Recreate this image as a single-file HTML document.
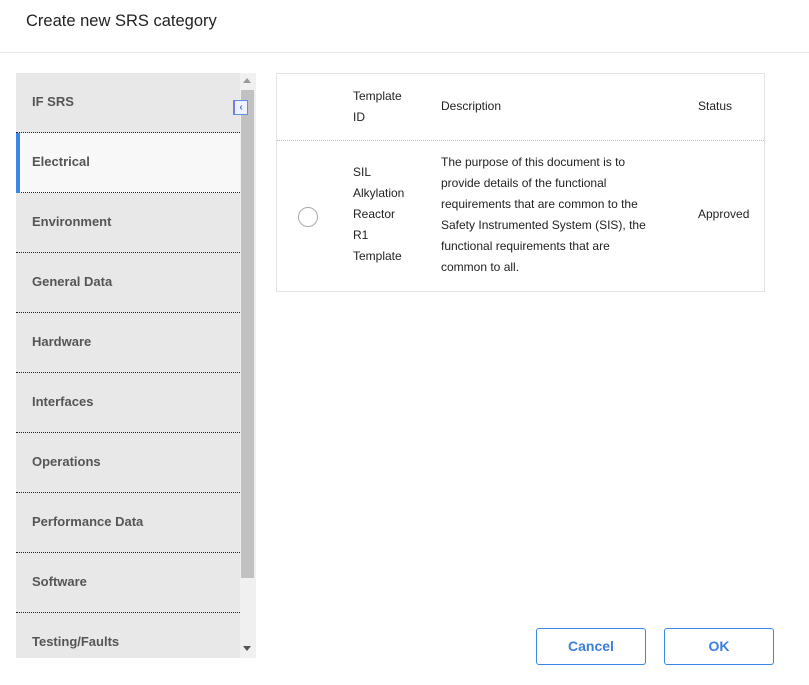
<!DOCTYPE html>
<html><head><style>
*{box-sizing:border-box;margin:0;padding:0}
body{width:809px;height:685px;background:#fff;font-family:"Liberation Sans",sans-serif;color:#333;position:relative;overflow:hidden}
.title{position:absolute;left:26px;top:12px;font-size:16.5px;color:#222}
.hl{position:absolute;left:0;top:52px;width:809px;height:1px;background:#e8e8e8}
.side{position:absolute;left:16px;top:73px;width:224px;height:585px;background:#e8e8e8;overflow:hidden}
.item{height:60px;border-bottom:1px dotted #222;font-size:13px;font-weight:bold;color:#555;padding-left:16px;line-height:58px;position:relative}
.item.sel{background:#f8f8f8}
.item.sel:before{content:"";position:absolute;left:0;top:0;width:4px;height:60px;background:#3b86e6}
.track{position:absolute;left:240px;top:73px;width:16px;height:585px;background:#f0f0f0}
.thumb{position:absolute;left:241px;top:90px;width:13px;height:488px;background:#c1c1c1}
.tbl{position:absolute;left:276px;top:73px;width:489px;height:219px;border:1px solid #e3e3e3;font-size:12px;color:#222}
.hd{position:absolute;left:0;top:66px;width:487px;border-top:1px dotted #bbb}
.t{position:absolute;line-height:21px}
.radio{position:absolute;left:21px;top:133px;width:20px;height:20px;border:1px solid #aaa;border-radius:50%}
.btn{position:absolute;top:628px;width:110px;height:37px;border:1px solid #3b86e6;border-radius:3px;color:#3b7fe0;font-weight:bold;font-size:14px;text-align:center;line-height:35px}
</style></head><body>
<div class="title">Create new SRS category</div>
<div class="hl"></div>
<div class="side">
<div class="item">IF SRS</div>
<div class="item sel">Electrical</div>
<div class="item">Environment</div>
<div class="item">General Data</div>
<div class="item">Hardware</div>
<div class="item">Interfaces</div>
<div class="item">Operations</div>
<div class="item">Performance Data</div>
<div class="item">Software</div>
<div class="item">Testing/Faults</div>
</div>
<div class="track"></div>
<div class="thumb"></div>
<div style="position:absolute;z-index:5;left:233px;top:100px;width:15px;height:15px;border:1px solid #5b8fe8;border-left:2px solid #7a7ae8;background:#eef3ff;font-size:10px;font-weight:bold;color:#4a6fd8;text-align:center;line-height:13px">&lsaquo;</div>
<div style="position:absolute;left:243px;top:78px;width:0;height:0;border-left:4px solid transparent;border-right:4px solid transparent;border-bottom:5px solid #999"></div>
<div style="position:absolute;left:243px;top:646px;width:0;height:0;border-left:4px solid transparent;border-right:4px solid transparent;border-top:5px solid #555"></div>
<div class="tbl">
<div class="t" style="left:76px;top:12px">Template<br>ID</div>
<div class="t" style="left:164px;top:22px">Description</div>
<div class="t" style="left:421px;top:22px">Status</div>
<div class="hd"></div>
<div class="radio"></div>
<div class="t" style="left:76px;top:88px">SIL<br>Alkylation<br>Reactor<br>R1<br>Template</div>
<div class="t" style="left:164px;top:78px">The purpose of this document is to<br>provide details of the functional<br>requirements that are common to the<br>Safety Instrumented System (SIS), the<br>functional requirements that are<br>common to all.</div>
<div class="t" style="left:421px;top:130px">Approved</div>
</div>
<div class="btn" style="left:536px">Cancel</div>
<div class="btn" style="left:664px">OK</div>
</body></html>
